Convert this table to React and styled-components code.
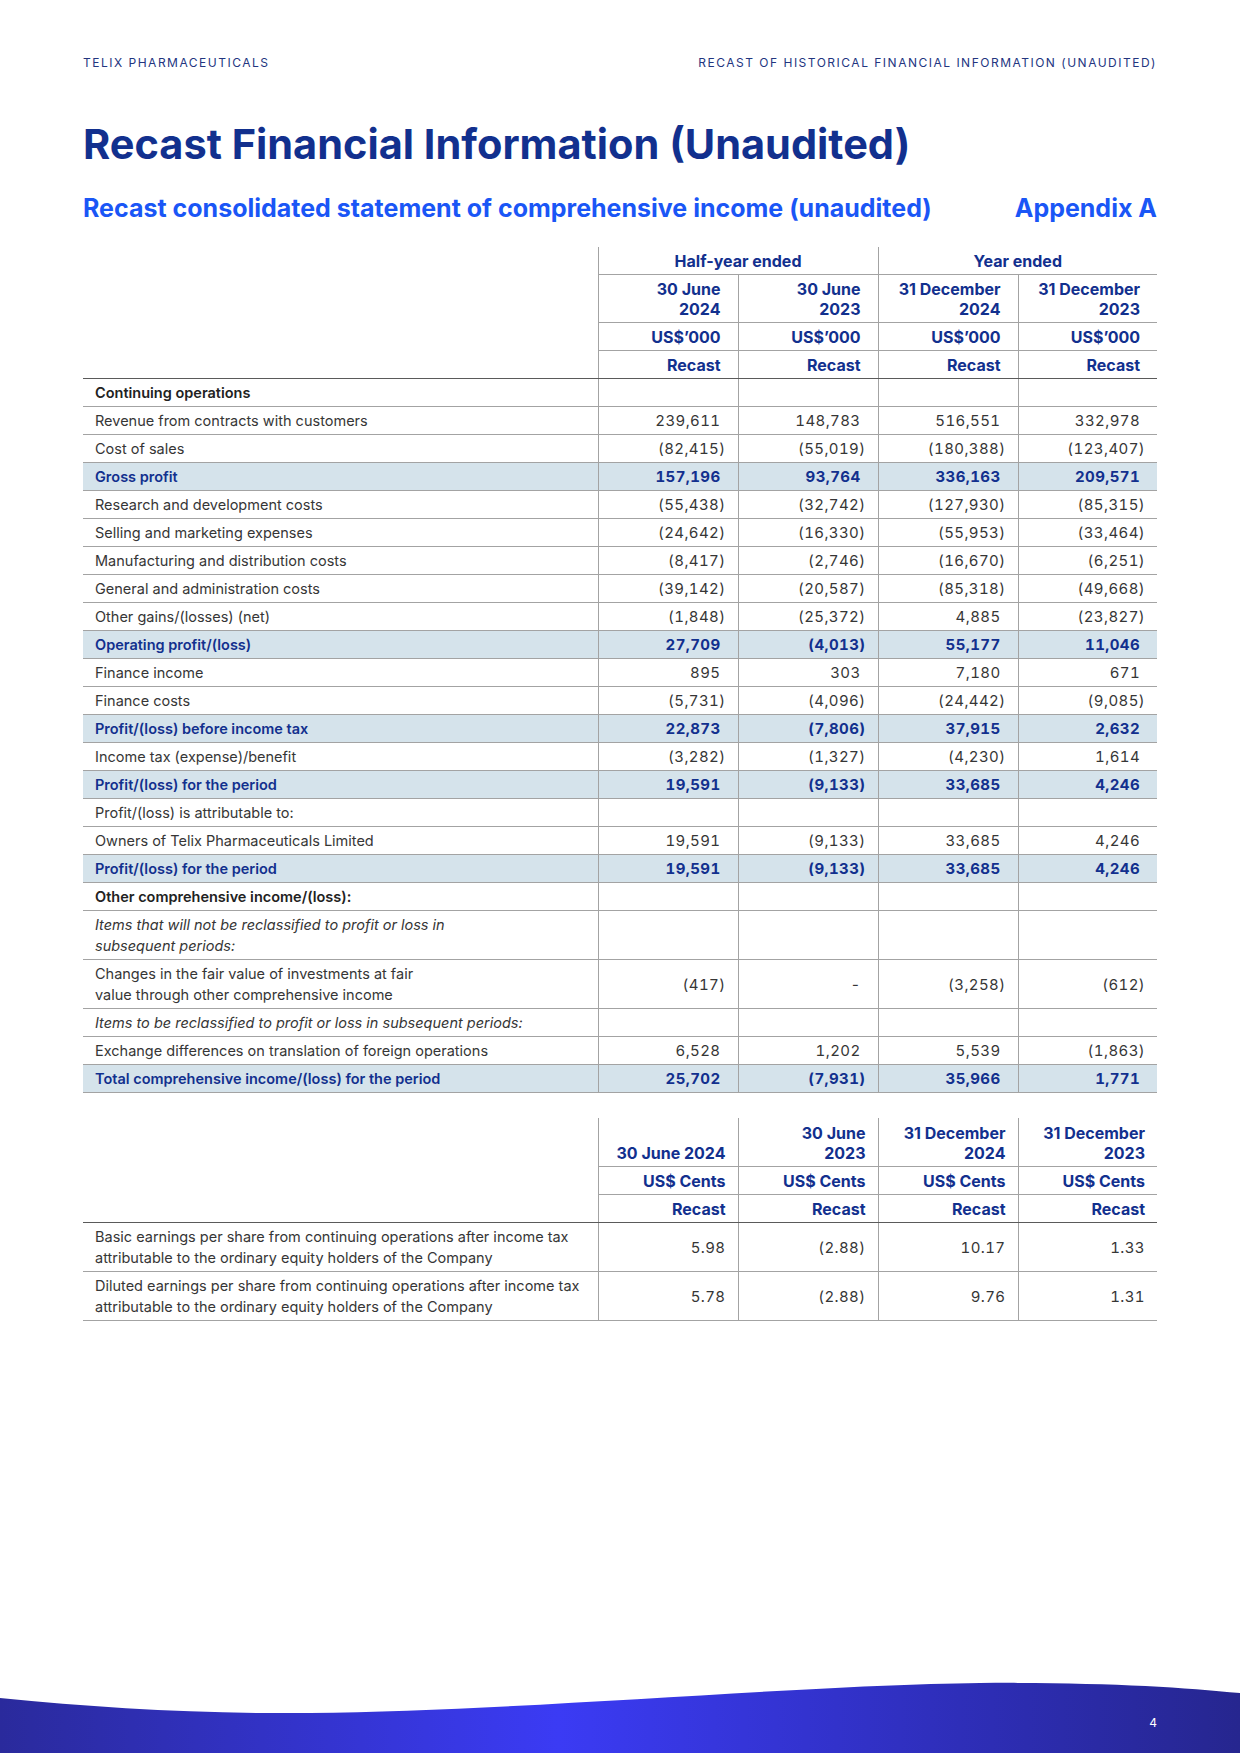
import styled, { createGlobalStyle } from "styled-components";

const NAVY = "#12308e";
const BRIGHT = "#1a56f6";
const LINE = "#a3a3a3";
const DARK_LINE = "#5a5a5a";
const TEXT = "#363636";
const HIGHLIGHT = "#d5e3eb";

const GlobalStyle = createGlobalStyle`
	html, body {
		margin: 0;
		padding: 0;
		background: #ffffff;
	}
	body {
		font-family: Inter, "Liberation Sans", sans-serif;
		color: ${TEXT};
	}
`;

const mainRows = [
	{ label: "Continuing operations", kind: "section" },
	{ label: "Revenue from contracts with customers", values: ["239,611", "148,783", "516,551", "332,978"] },
	{ label: "Cost of sales", values: ["(82,415)", "(55,019)", "(180,388)", "(123,407)"] },
	{ label: "Gross profit", kind: "total", values: ["157,196", "93,764", "336,163", "209,571"] },
	{ label: "Research and development costs", values: ["(55,438)", "(32,742)", "(127,930)", "(85,315)"] },
	{ label: "Selling and marketing expenses", values: ["(24,642)", "(16,330)", "(55,953)", "(33,464)"] },
	{ label: "Manufacturing and distribution costs", values: ["(8,417)", "(2,746)", "(16,670)", "(6,251)"] },
	{ label: "General and administration costs", values: ["(39,142)", "(20,587)", "(85,318)", "(49,668)"] },
	{ label: "Other gains/(losses) (net)", values: ["(1,848)", "(25,372)", "4,885", "(23,827)"] },
	{ label: "Operating profit/(loss)", kind: "total", values: ["27,709", "(4,013)", "55,177", "11,046"] },
	{ label: "Finance income", values: ["895", "303", "7,180", "671"] },
	{ label: "Finance costs", values: ["(5,731)", "(4,096)", "(24,442)", "(9,085)"] },
	{ label: "Profit/(loss) before income tax", kind: "total", values: ["22,873", "(7,806)", "37,915", "2,632"] },
	{ label: "Income tax (expense)/benefit", values: ["(3,282)", "(1,327)", "(4,230)", "1,614"] },
	{ label: "Profit/(loss) for the period", kind: "total", values: ["19,591", "(9,133)", "33,685", "4,246"] },
	{ label: "Profit/(loss) is attributable to:" },
	{ label: "Owners of Telix Pharmaceuticals Limited", values: ["19,591", "(9,133)", "33,685", "4,246"] },
	{ label: "Profit/(loss) for the period", kind: "total", values: ["19,591", "(9,133)", "33,685", "4,246"] },
	{ label: "Other comprehensive income/(loss):", kind: "section" },
	{
		label: ["Items that will not be reclassified to profit or loss in", "subsequent periods:"],
		kind: "italic",
	},
	{
		label: ["Changes in the fair value of investments at fair", "value through other comprehensive income"],
		values: ["(417)", "-", "(3,258)", "(612)"],
	},
	{ label: "Items to be reclassified to profit or loss in subsequent periods:", kind: "italic" },
	{
		label: "Exchange differences on translation of foreign operations",
		values: ["6,528", "1,202", "5,539", "(1,863)"],
	},
	{
		label: "Total comprehensive income/(loss) for the period",
		kind: "total",
		values: ["25,702", "(7,931)", "35,966", "1,771"],
	},
];

const epsRows = [
	{
		label: [
			"Basic earnings per share from continuing operations after income tax",
			"attributable to the ordinary equity holders of the Company",
		],
		values: ["5.98", "(2.88)", "10.17", "1.33"],
	},
	{
		label: [
			"Diluted earnings per share from continuing operations after income tax",
			"attributable to the ordinary equity holders of the Company",
		],
		values: ["5.78", "(2.88)", "9.76", "1.31"],
	},
];

const renderLabel = (label) =>
	Array.isArray(label)
		? label.map((line, i) => (
				<span key={i}>
					{line}
					{i < label.length - 1 && <br />}
				</span>
		  ))
		: label;

const Columns = () => (
	<colgroup>
		<col style={{ width: 515 }} />
		<col style={{ width: 140 }} />
		<col style={{ width: 140 }} />
		<col style={{ width: 140 }} />
		<col style={{ width: 139 }} />
	</colgroup>
);

const App = () => {
	return (
		<>
			<GlobalStyle />
			<Page>
				<Content>
					<TopBar>
						<TopLabel>TELIX PHARMACEUTICALS</TopLabel>
						<TopLabel>RECAST OF HISTORICAL FINANCIAL INFORMATION (UNAUDITED)</TopLabel>
					</TopBar>

					<Title>Recast Financial Information (Unaudited)</Title>

					<SubtitleRow>
						<Subtitle>Recast consolidated statement of comprehensive income (unaudited)</Subtitle>
						<Subtitle>Appendix A</Subtitle>
					</SubtitleRow>

					<Table>
						<Columns />
						<thead>
							<tr>
								<BlankHead rowSpan={4} />
								<GroupHead colSpan={2}>Half-year ended</GroupHead>
								<GroupHead colSpan={2}>Year ended</GroupHead>
							</tr>
							<tr>
								<ColHead>
									30 June
									<br />
									2024
								</ColHead>
								<ColHead>
									30 June
									<br />
									2023
								</ColHead>
								<ColHead>
									31 December
									<br />
									2024
								</ColHead>
								<ColHead>
									31 December
									<br />
									2023
								</ColHead>
							</tr>
							<tr>
								<ColHead>US$’000</ColHead>
								<ColHead>US$’000</ColHead>
								<ColHead>US$’000</ColHead>
								<ColHead>US$’000</ColHead>
							</tr>
							<tr>
								<ColHead $last>Recast</ColHead>
								<ColHead $last>Recast</ColHead>
								<ColHead $last>Recast</ColHead>
								<ColHead $last>Recast</ColHead>
							</tr>
						</thead>
						<tbody>
							{mainRows.map((row, i) => (
								<BodyRow key={i} $total={row.kind === "total"}>
									<LabelCell $kind={row.kind}>{renderLabel(row.label)}</LabelCell>
									{[0, 1, 2, 3].map((c) => {
										const v = row.values ? row.values[c] : "";
										return (
											<NumCell key={c} $bold={row.kind === "total"} $paren={v.startsWith("(")}>
												{v}
											</NumCell>
										);
									})}
								</BodyRow>
							))}
						</tbody>
					</Table>

					<Table $gap>
						<Columns />
						<thead>
							<tr>
								<BlankHead rowSpan={3} />
								<ColHead $tall $even>30 June 2024</ColHead>
								<ColHead $tall $even>
									30 June
									<br />
									2023
								</ColHead>
								<ColHead $tall $even>
									31 December
									<br />
									2024
								</ColHead>
								<ColHead $tall $even>
									31 December
									<br />
									2023
								</ColHead>
							</tr>
							<tr>
								<ColHead $even>US$ Cents</ColHead>
								<ColHead $even>US$ Cents</ColHead>
								<ColHead $even>US$ Cents</ColHead>
								<ColHead $even>US$ Cents</ColHead>
							</tr>
							<tr>
								<ColHead $even $last>Recast</ColHead>
								<ColHead $even $last>Recast</ColHead>
								<ColHead $even $last>Recast</ColHead>
								<ColHead $even $last>Recast</ColHead>
							</tr>
						</thead>
						<tbody>
							{epsRows.map((row, i) => (
								<BodyRow key={i}>
									<LabelCell>{renderLabel(row.label)}</LabelCell>
									{row.values.map((v, c) => (
										<NumCell key={c} $even>
											{v}
										</NumCell>
									))}
								</BodyRow>
							))}
						</tbody>
					</Table>
				</Content>

				<Footer>
					<svg width="1240" height="73" viewBox="0 0 1240 73" preserveAspectRatio="none">
						<defs>
							<linearGradient id="waveFill" x1="0" y1="0" x2="1" y2="0">
								<stop offset="0" stopColor="#2a2a9c" />
								<stop offset="0.45" stopColor="#3b3bf4" />
								<stop offset="0.8" stopColor="#2d2db4" />
								<stop offset="1" stopColor="#26268f" />
							</linearGradient>
						</defs>
						<path
							d="M0 18 C 100 28 200 34 310 33 C 520 31 800 5 980 3 C 1100 2 1180 7 1240 13 L 1240 73 L 0 73 Z"
							fill="url(#waveFill)"
						/>
					</svg>
					<PageNumber>4</PageNumber>
				</Footer>
			</Page>
		</>
	);
};

const Page = styled.div`
	width: 1240px;
	min-height: 1753px;
	display: flex;
	flex-direction: column;
	background: #ffffff;
`;

const Content = styled.main`
	padding: 55px 83px 0 83px;
	display: flex;
	flex-direction: column;
`;

const TopBar = styled.header`
	display: flex;
	justify-content: space-between;
	align-items: center;
`;

const TopLabel = styled.span`
	font-size: 12px;
	line-height: 16px;
	letter-spacing: 1.5px;
	color: #23357f;
`;

const Title = styled.h1`
	margin: 49px 0 0 0;
	font-size: 41.5px;
	line-height: 48px;
	font-weight: 700;
	letter-spacing: 0;
	color: ${NAVY};
`;

const SubtitleRow = styled.div`
	margin-top: 25px;
	display: flex;
	justify-content: space-between;
	align-items: baseline;
`;

const Subtitle = styled.h2`
	margin: 0;
	font-size: 25px;
	line-height: 30px;
	font-weight: 700;
	letter-spacing: 0;
	color: ${BRIGHT};
`;

const Table = styled.table`
	margin-top: ${(p) => (p.$gap ? "25px" : "24px")};
	width: 1074px;
	table-layout: fixed;
	border-collapse: collapse;
	font-size: 15px;
`;

const BlankHead = styled.th`
	padding: 0;
	border-bottom: 1px solid ${DARK_LINE};
`;

const GroupHead = styled.th`
	padding: 3.5px 0;
	line-height: 20px;
	font-size: 16px;
	font-weight: 700;
	color: ${NAVY};
	text-align: center;
	border-left: 1px solid ${LINE};
	border-bottom: 1px solid ${LINE};
`;

const ColHead = styled.th`
	padding: ${(p) => (p.$tall ? "4.5px" : "3.5px")} ${(p) => (p.$even ? "12px" : "17px")} 3.5px 8px;
	line-height: 20px;
	font-size: 16px;
	font-weight: 700;
	color: ${NAVY};
	text-align: right;
	vertical-align: bottom;
	border-left: 1px solid ${LINE};
	border-bottom: 1px solid ${(p) => (p.$last ? DARK_LINE : LINE)};
`;

const BodyRow = styled.tr`
	background: ${(p) => (p.$total ? HIGHLIGHT : "transparent")};
`;

const LabelCell = styled.td`
	padding: 3px 12px;
	line-height: 21px;
	font-size: 14.5px;
	font-weight: ${(p) => (p.$kind === "total" || p.$kind === "section" ? 600 : 400)};
	font-style: ${(p) => (p.$kind === "italic" ? "italic" : "normal")};
	color: ${(p) => (p.$kind === "total" ? NAVY : p.$kind === "section" ? "#222222" : TEXT)};
	border-bottom: 1px solid ${LINE};
`;

const NumCell = styled.td`
	padding: 3px ${(p) => (p.$even ? "12px" : p.$paren ? "12px" : "17px")} 3px 8px;
	line-height: 21px;
	font-size: 15px;
	letter-spacing: 0.4px;
	font-variant-numeric: tabular-nums;
	font-weight: ${(p) => (p.$bold ? 700 : 400)};
	color: ${(p) => (p.$bold ? NAVY : TEXT)};
	text-align: right;
	vertical-align: middle;
	white-space: nowrap;
	border-left: 1px solid ${LINE};
	border-bottom: 1px solid ${LINE};
`;

const Footer = styled.footer`
	position: relative;
	margin-top: auto;
	height: 73px;
	line-height: 0;

	svg {
		display: block;
	}
`;

const PageNumber = styled.span`
	position: absolute;
	right: 83px;
	top: 35px;
	font-size: 12px;
	line-height: 16px;
	color: #ffffff;
`;

export default App;
